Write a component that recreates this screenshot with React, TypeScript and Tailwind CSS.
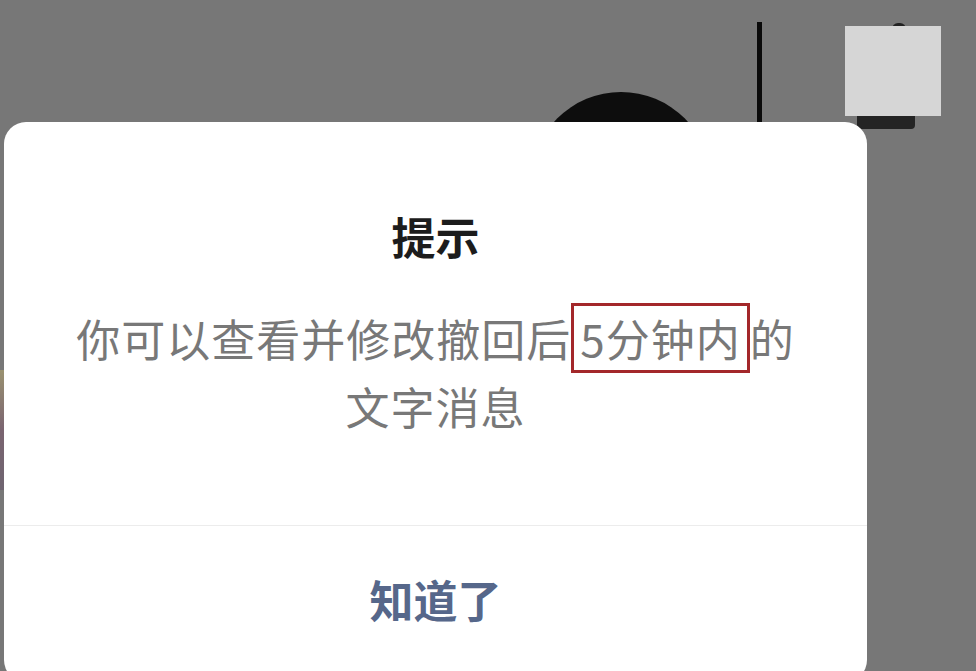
export default function App() {
  return (
    <div
      className="relative h-[671px] w-[976px] overflow-hidden bg-[#777777]"
      style={{ fontFamily: '"Noto Sans CJK SC", "Noto Sans", sans-serif' }}
    >
      {/* things behind the dialog */}
      <div className="absolute left-[531px] top-[92px] h-[180px] w-[180px] rounded-full bg-[#0d0d0d]" />
      <div className="absolute left-[757px] top-[22px] h-[100px] w-[5px] bg-[#0a0a0a]" />
      <div className="absolute left-[892px] top-[23px] h-[6px] w-[14px] rounded-t-full bg-[#222]" />
      <div className="absolute left-[857px] top-[112px] h-[17px] w-[58px] rounded-b-[4px] bg-[#242424]" />
      <div className="absolute left-[845px] top-[26px] h-[90px] w-[96px] bg-[#d6d6d6]" />
      <div className="absolute left-0 top-[370px] h-[120px] w-[4px] bg-gradient-to-b from-[#9a9270] via-[#7a6470] to-[#6e6470]" />

      {/* dialog */}
      <div className="relative ml-[4px] mt-[122px] flex h-[560px] w-[863px] flex-col rounded-[22px] bg-white">
        <div className="flex flex-col items-center px-[40px] pt-[86px] pb-[85px]">
          <div className="text-[44px] font-bold leading-[56px] text-[#1c1c1c]">提示</div>
          <p className="mt-[40px] text-center text-[44px] leading-[68px] tracking-[1px] text-[#787878]">
            你可以查看并修改撤回后
            <span className="border-[3px] border-[#a3282a] pl-[6px] pr-[6px]">5分钟内</span>
            的
            <br />
            文字消息
          </p>
        </div>
        <div className="h-px w-full bg-[#ececec]" />
        <button className="flex h-[146px] items-center justify-center text-[44px] font-bold text-[#56678a]">
          知道了
        </button>
      </div>
    </div>
  );
}
